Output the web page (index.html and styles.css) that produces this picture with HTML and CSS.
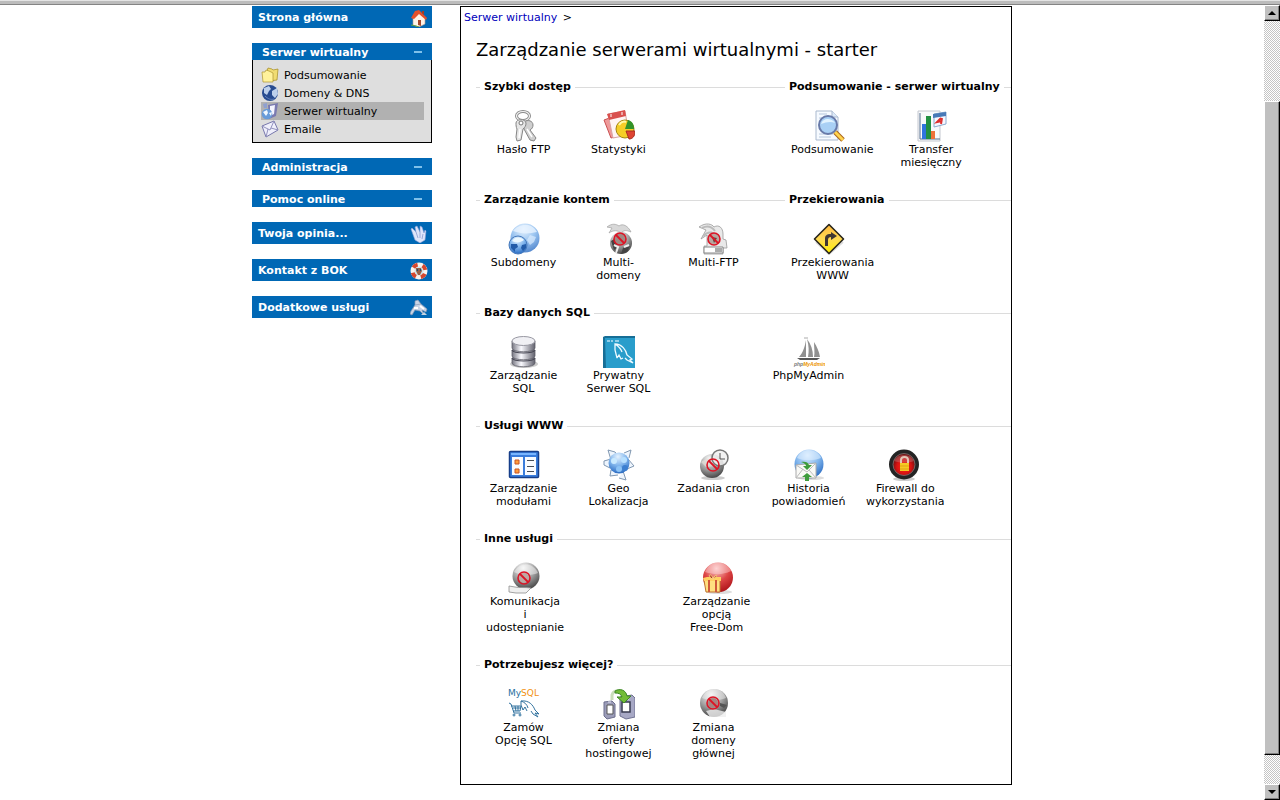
FILE: index.html
```html
<!DOCTYPE html>
<html lang="pl">

<head>
    <meta charset="UTF-8">
    <title>Zarządzanie serwerami wirtualnymi</title>
    <link rel="stylesheet" href="styles.css">
</head>

<body>
    <!-- shared gradients and symbols -->
    <svg class="defs" aria-hidden="true">
        <defs>
            <radialGradient id="blue" cx="45%" cy="20%" r="85%">
                <stop offset="0" stop-color="#e4f2ff" />
                <stop offset=".5" stop-color="#7fb4ec" />
                <stop offset="1" stop-color="#1f62bd" />
            </radialGradient>
            <radialGradient id="gray" cx="40%" cy="20%" r="85%">
                <stop offset="0" stop-color="#fafafa" />
                <stop offset=".5" stop-color="#a4a4a4" />
                <stop offset="1" stop-color="#3e3e3e" />
            </radialGradient>
            <radialGradient id="red" cx="45%" cy="20%" r="85%">
                <stop offset="0" stop-color="#fbd0d0" />
                <stop offset=".5" stop-color="#dd4545" />
                <stop offset="1" stop-color="#a80d14" />
            </radialGradient>
            <radialGradient id="glow" cx="50%" cy="60%" r="55%">
                <stop offset="0" stop-color="#ff2a12" />
                <stop offset=".6" stop-color="#d81212" />
                <stop offset="1" stop-color="#6d1010" />
            </radialGradient>
            <linearGradient id="metal">
                <stop offset="0" stop-color="#777782" />
                <stop offset=".4" stop-color="#fafaff" />
                <stop offset="1" stop-color="#62626e" />
            </linearGradient>
            <linearGradient id="yellow" x2="0" y2="1">
                <stop offset="0" stop-color="#ffb83e" />
                <stop offset=".5" stop-color="#ffda52" />
                <stop offset="1" stop-color="#fff000" />
            </linearGradient>
            <symbol id="ban" viewBox="0 0 14 14">
                <circle cx="7" cy="7" r="6" fill="none" stroke="#dc1425" stroke-width="1.6" />
                <path d="M3 3l8 8" stroke="#dc1425" stroke-width="1.8" />
            </symbol>
        </defs>
    </svg>

    <div id="topbar"></div>
    <div id="window">
        <div id="page">
            <nav id="sidebar">
                <a class="box" href="#">Strona główna
                    <svg viewBox="0 0 18 18"><path d="M3 9v7l6 2 6-3V8L9 3z" fill="#fff4e8" stroke="#ba9c8a" stroke-width=".6" /><path d="M1 9l4-7 4-1 8 8-1 2-7-6-5 5z" fill="#e4512b" /><path d="M12 2h2v4l-2-2z" fill="#a63c22" /><path d="M8 11h3v6l-3-1z" fill="#a5482c" /><path d="M1 16l5 1 3 1" stroke="#62a43e" fill="none" /></svg>
                </a>

                <div class="group">
                    <button type="button">Serwer wirtualny <svg class="minus" viewBox="0 0 8 2"><path d="M0 0h8v2H0z" /></svg></button>
                    <ul>
                        <li><a href="#">
                            <svg viewBox="0 0 18 18"><path d="M6 5l1-3 4 1 1 1 5-1-1 11-8 1z" fill="#f0dc72" stroke="#a48a20" stroke-width=".7" /><path d="M1 6h3l1-2 3 1 4 2v9H2z" fill="#fff29b" stroke="#ae942e" stroke-width=".7" /></svg>
                            Podsumowanie</a></li>
                        <li><a href="#">
                            <svg viewBox="0 0 18 18"><circle cx="9" cy="9" r="8" fill="#284c91" /><path d="M3 4l5-2 2 3-2 2-2 4-3-2zM11 7l5-3 1 6-3 4-3-3z" fill="#bdd0ec" /><path d="M4 12c3 3 6 4 9 3" stroke="#6583bb" fill="none" /></svg>
                            Domeny &amp; DNS</a></li>
                        <li class="active"><a href="#">
                            <svg viewBox="0 0 18 18"><path d="M2 2l4-1v5H3z" fill="#8fa0d0" /><path d="M7 3l10-2-2 13-7 3z" fill="#7a7ab0" /><path d="M9 4l5-1-1 9-4 2z" fill="#f5f5ff" /><circle cx="6" cy="12" r="5.3" fill="#679bd9" /><path d="M2 10l4-2 1 3-2 3zM8 11l3-1-1 4z" fill="#f0f8ff" /></svg>
                            Serwer wirtualny</a></li>
                        <li><a href="#">
                            <svg viewBox="0 0 18 18"><path d="M1 6l12-5 4 9-12 7z" fill="#efeffb" stroke="#7777ac" /><path d="M1 6l8 4 4-9M5 17l2-8M17 10l-7-2" fill="none" stroke="#9292be" /></svg>
                            Emaile</a></li>
                    </ul>
                </div>

                <div class="group"><button type="button">Administracja <svg class="minus" viewBox="0 0 8 2"><path d="M0 0h8v2H0z" /></svg></button></div>
                <div class="group"><button type="button">Pomoc online <svg class="minus" viewBox="0 0 8 2"><path d="M0 0h8v2H0z" /></svg></button></div>

                <a class="box" href="#">Twoja opinia...
                    <svg viewBox="0 0 18 18"><path d="M1 4l1-1 4 4-1-5 2-1 3 6V1l2 1 2 6 1-3 1 1-1 9-5 3-5-3z" fill="#dfe5fa" stroke="#8ba0d7" stroke-width=".6" /><path d="M6 7l2 6M10 7v6M13 9l-1 5" stroke="#9caad8" /></svg>
                </a>
                <a class="box" href="#">Kontakt z BOK
                    <svg viewBox="0 0 18 18"><circle cx="9" cy="9" r="6.5" fill="#cbe5ed" stroke="#f8f3ee" stroke-width="4" /><circle cx="9" cy="9" r="6.5" fill="none" stroke="#d4472f" stroke-width="4" stroke-dasharray="5 5.2" stroke-dashoffset="-3" /><path d="M6 6h5l1 3-2 4H8l-2-4z" fill="#9a6047" /><path d="M7 8h1M10 8h1" stroke="#174e78" stroke-width="2" /></svg>
                </a>
                <a class="box" href="#">Dodatkowe usługi
                    <svg viewBox="0 0 18 18"><path d="M5 6V2l3-1 3 4M1 12l4-6 6-1 6 5-1 3-4-2 2 5-4-4-5-1-3 5-2-1z" fill="#c8d4e6" stroke="#8798b3" stroke-width=".7" /><path d="M4 9l4 0M10 7l4 3" stroke="#fff" stroke-width="2" /><path d="M11 16h6l-3-3z" fill="#c4d4e2" /></svg>
                </a>
            </nav>

            <main>
                <p id="breadcrumb"><a href="#">Serwer wirtualny</a> &gt;</p>
                <h1>Zarządzanie serwerami wirtualnymi - starter</h1>

                <div class="row">
                    <section>
                        <h2>Szybki dostęp</h2>
                        <ul class="icons">
                            <li><a href="#">
                                <svg viewBox="0 0 32 32"><ellipse cx="15" cy="6" rx="6.5" ry="4.5" fill="none" stroke="#8a8a8a" stroke-width="3" /><ellipse cx="15" cy="6" rx="6.5" ry="4.5" fill="none" stroke="#f2f2f2" stroke-width="1.2" /><path d="M16 12c4-3 9-1 9 3 0 2-1 4-3 5l6 8-2 3-4-1-6-11z" fill="#cfcfcf" stroke="#858585" /><path d="M8 13c0-4 9-5 10 0 0 3-1 4-3 6l-2 11-4 1-1-4 1-8c-1-2-1-4-1-6z" fill="#e6e6e6" stroke="#858585" /><circle cx="13" cy="13" r="2" fill="#fff" stroke="#777" /><path d="M12 19l-1 9M19 19l5 8" stroke="#fff" stroke-width="1.5" /></svg>
                                <span>Hasło FTP</span></a></li>
                            <li><a href="#">
                                <svg viewBox="0 0 32 32"><path d="M1 10l8-3 3 20-4 1z" fill="#ef9999" stroke="#c94f50" /><path d="M5 4l17-3 4 24-16 3z" fill="#fff4f4" stroke="#d9a4a4" /><path d="M4 4l18-4 1 6-17 4z" fill="#d9504e" /><path d="M8 4v3M19 2v3" stroke="#fff" /><circle cx="22" cy="19" r="9" fill="#f5ce27" stroke="#a38411" /><path d="M22 19l3-9c4 1 6 4 6 9z" fill="#319329" /><path d="M23 21h9c0 6-3 8-6 8z" fill="#de4533" stroke="#a82d20" /><path d="M16 15c2-3 5-4 7-3" stroke="#fff8a4" stroke-width="2" fill="none" /></svg>
                                <span>Statystyki</span></a></li>
                        </ul>
                    </section>
                    <section>
                        <h2>Podsumowanie - serwer wirtualny</h2>
                        <ul class="icons">
                            <li><a href="#">
                                <svg viewBox="0 0 32 32"><path d="M3 1h16l6 6v23H3z" fill="#f6faff" stroke="#aab9ce" /><path d="M19 1v6h6" fill="#dce9f8" stroke="#aab9ce" /><path d="M6 4h8M6 8h6M6 24h14M6 27h12" stroke="#b6c7dc" /><path d="M22 22l8 8" stroke="#a86419" stroke-width="5" /><path d="M22 22l8 8" stroke="#ffd34e" stroke-width="3" /><circle cx="15" cy="15" r="9" fill="#a9d0f5" stroke="#687aa9" stroke-width="2" /><path d="M8 14c2-7 11-6 14-1-4-2-9-1-14 1z" fill="#e2f3ff" /></svg>
                                <span>Podsumowanie</span></a></li>
                            <li><a href="#">
                                <svg viewBox="0 0 32 32"><path d="M2 1h22v30H2z" fill="#f8f9fb" stroke="#c4c8d0" /><path d="M4 3v26h20" stroke="#566f8d" fill="none" /><path d="M6 14h4v15H6z" fill="#2f74dd" /><path d="M10 6h5v23h-5z" fill="#219042" /><path d="M15 21h4v8h-4z" fill="#ef713a" /><path d="M18 4l12-2v12l-12 3z" fill="#f5f7ff" stroke="#8aaace" /><path d="M17 4l13-2v4l-13 2z" fill="#4879b7" /><path d="M25 8l-4 4 5-1M26 8l-1 6" stroke="#df2f2d" stroke-width="2" fill="none" /></svg>
                                <span>Transfer miesięczny</span></a></li>
                        </ul>
                    </section>
                </div>

                <div class="row">
                    <section>
                        <h2>Zarządzanie kontem</h2>
                        <ul class="icons">
                            <li><a href="#">
                                <svg viewBox="0 0 32 32"><circle cx="17" cy="15" r="14.5" fill="url(#blue)" opacity=".8" /><path d="M5 8c4-6 18-10 24 1-8 2-16 2-24-1z" fill="#e7f3ff" opacity=".8" /><path d="M22 12l6 2-2 5-4 3-3-5z" fill="#dcecff" opacity=".7" /><circle cx="10" cy="22" r="9" fill="url(#blue)" stroke="#4679bb" /><path d="M3 21l6 0 1 3-3 2v3l-4-4zM14 22l4-1v4l-3 3-2-3z" fill="#235ca9" /><path d="M4 18c3-5 10-4 12-1-4 3-8 3-12 1z" fill="#ecf8ff" /></svg>
                                <span>Subdomeny</span></a></li>
                            <li><a href="#">
                                <svg viewBox="0 0 32 32"><path d="M4 4c5-4 9-3 12-1 4-3 9 0 12 6-5-2-7-2-10 1-3-3-8-3-12 0l3-5z" fill="#d8d8d8" stroke="#aaa" stroke-width=".8" /><circle cx="18" cy="20" r="11" fill="url(#gray)" /><path d="M8 18l5-3 1 10-3 2zM20 25l7-2-3 6-6 2z" fill="#444" /><path d="M11 22l4 2-2 6M21 24l5-2" stroke="#eee" stroke-width="2" fill="none" /><circle cx="17" cy="16" r="6" fill="#a08a84" /><use href="#ban" x="10" y="9" width="14" height="14" /></svg>
                                <span>Multi-<br>domeny</span></a></li>
                            <li><a href="#">
                                <svg viewBox="0 0 32 32"><path d="M1 4c7-5 13-3 15 0 5-3 9 1 9 7v5l3 1 1 8h-4v6H6v-8h3V12l-6 4 5-9z" fill="#e9e9e9" stroke="#999" stroke-width=".8" /><path d="M4 5c6-3 10-1 13 3M5 13c6-6 11-4 15 2" fill="none" stroke="#bbb" stroke-width="2" /><path d="M6 24h19v6H6z" fill="#fff" stroke="#888" /><path d="M17 25h7v4h-7z" fill="#aaa" /><circle cx="16" cy="16" r="6" fill="#b8a6a0" /><path d="M14 14l5 1-3 5z" fill="#5e4840" /><use href="#ban" x="9" y="9" width="14" height="14" /></svg>
                                <span>Multi-FTP</span></a></li>
                        </ul>
                    </section>
                    <section>
                        <h2>Przekierowania</h2>
                        <ul class="icons">
                            <li><a href="#">
                                <svg viewBox="0 0 32 32"><path d="M3 19l13 12 14-12" stroke="#ddd" stroke-width="2" fill="none" /><path d="M16 1.5L30.5 16 16 30.5 1.5 16z" fill="url(#yellow)" stroke="#29251b" stroke-width="1.6" stroke-linejoin="round" /><path d="M12 23h3v-6c0-2 1-3 3-3v3l6-4-6-4v2c-5 0-6 2-6 5z" fill="#403732" /></svg>
                                <span>Przekierowania WWW</span></a></li>
                        </ul>
                    </section>
                </div>

                <section>
                    <h2>Bazy danych SQL</h2>
                    <ul class="icons">
                        <li><a href="#">
                            <svg viewBox="0 0 32 32"><ellipse cx="16" cy="28" rx="14" ry="4" fill="#ccc" /><path d="M4 22v5c0 5 23 5 23 0v-5z" fill="url(#metal)" stroke="#60606a" stroke-width=".8" /><path d="M4 14v6c0 5 23 5 23 0v-6z" fill="url(#metal)" stroke="#60606a" stroke-width=".8" /><path d="M4 5v7c0 5 23 5 23 0V5z" fill="url(#metal)" stroke="#60606a" stroke-width=".8" /><ellipse cx="15.5" cy="5" rx="11.5" ry="4.5" fill="#f0f0f4" stroke="#9898a2" /><path d="M4 14c2 4 21 4 23 0M4 22c2 4 21 4 23 0" stroke="#4b4b57" stroke-width="1.2" fill="none" /></svg>
                            <span>Zarządzanie SQL</span></a></li>
                        <li><a href="#">
                            <svg viewBox="0 0 32 32"><path d="M0 1l2-1h30v32H0z" fill="#176e96" /><path d="M2 2h30v30H3z" fill="#299dcb" /><path d="M4 5h3M8 5h2M12 5h4" stroke="#b8e0f2" stroke-width="1.5" /><path d="M14 22l-2-8V8c7 0 11 6 12 11l5 4-2 1 3 3-6-3-2-2M14 22l2-3 2 4 2-1M12 8c3 2 6 5 7 8" stroke="#eefaff" stroke-width="1.3" fill="none" /></svg>
                            <span>Prywatny Serwer SQL</span></a></li>
                        <li></li>
                        <li><a href="#">
                            <svg viewBox="0 0 32 32"><path d="M13 4c-1 6-3 13-7 17h7zM14 3c2 7 2 12 1 18h5c0-7-2-13-6-18zM21 6c0 6 1 11 0 15h6c-1-6-3-10-6-15z" fill="#909090" /><path d="M4 22h23l-3 2H7z" fill="#555" /><path d="M11 2h4" stroke="#aaa" /><text x="1" y="30" class="pma">php<tspan fill="#ed9500">MyAdmin</tspan></text></svg>
                            <span>PhpMyAdmin</span></a></li>
                    </ul>
                </section>

                <section>
                    <h2>Usługi WWW</h2>
                    <ul class="icons">
                        <li><a href="#">
                            <svg viewBox="0 0 32 32"><rect x="1.5" y="2.5" width="29" height="26" rx="1" fill="#397cdc" stroke="#173e89" stroke-width="1.5" /><path d="M4 8h11v18H4zM17 8h11v18H17z" fill="#f9fbff" /><path d="M7 11h4v4H7zM7 20h4v4H7z" fill="#ff9d3c" stroke="#c85324" /><path d="M19 11.5h7M19 17.5h7M19 22.5h7" stroke="#454b56" stroke-width="1.2" /><path d="M3 5h25" stroke="#78b5ff" stroke-width="2" /></svg>
                            <span>Zarządzanie modułami</span></a></li>
                        <li><a href="#">
                            <svg viewBox="0 0 32 32"><g fill="#eef5fd" stroke="#8097b1"><path d="M5 1l7 2 4 5-8 3zM21 4l7-3-2 8M1 12l7-2-1 9-6-3zM25 10l6 7-7 3M8 21l-1 6 8-1M20 22l3 9-7-2" stroke-linejoin="round" /></g><circle cx="16" cy="14" r="10.5" fill="url(#blue)" /><circle cx="11" cy="12" r="3" fill="#c9eaff" /><circle cx="21" cy="11" r="3" fill="#b7e0ff" /><circle cx="22" cy="19" r="3" fill="#3c7fd0" /><circle cx="16" cy="20" r="3" fill="#8cc3f6" /></svg>
                            <span>Geo Lokalizacja</span></a></li>
                        <li><a href="#">
                            <svg viewBox="0 0 32 32"><ellipse cx="15" cy="29" rx="12" ry="2" fill="#ccc" /><circle cx="14" cy="17" r="12" fill="url(#gray)" /><path d="M3 13c5-4 13-5 20-2l-5 6-10 1z" fill="#e5dfd9" opacity=".7" /><circle cx="22" cy="9" r="8" fill="#f0f0f0" fill-opacity=".85" stroke="#777" stroke-width="1.5" /><path d="M22 4v6h5" fill="none" stroke="#555" /><use href="#ban" x="8" y="9" width="14" height="14" /></svg>
                            <span>Zadania cron</span></a></li>
                        <li><a href="#">
                            <svg viewBox="0 0 32 32"><ellipse cx="18" cy="29" rx="13" ry="2" fill="#ddd" /><circle cx="16" cy="15" r="14.5" fill="url(#blue)" /><path d="M4 9C9-2 24-1 28 9c-8 3-17 3-24 0z" fill="#daedff" opacity=".6" /><path d="M3 16l20-2v15H3z" fill="#f9f9f6" stroke="#aaa" /><path d="M3 16l11 7 9-9M3 29l7-9M23 29l-7-8" fill="none" stroke="#bbb" /><path d="M8 13c4-1 7 0 8 3h3l-5 5-4-4h3c0-2-2-3-5-4zM14 24l-5 4h3v4h4v-4h3z" fill="#3e9c3c" /></svg>
                            <span>Historia powiadomień</span></a></li>
                        <li><a href="#">
                            <svg viewBox="0 0 32 32"><ellipse cx="16" cy="30" rx="11" ry="2" fill="#ccc" /><circle cx="16" cy="15.5" r="15" fill="#242424" /><circle cx="16" cy="15.5" r="11" fill="url(#glow)" stroke="#777" stroke-width=".8" /><path d="M6 12c3-8 17-8 20 0-5 2-14 2-20 0z" fill="#c88" opacity=".4" /><path d="M13 15v-4c0-4 7-4 7 0v4" fill="none" stroke="#e2c5b6" stroke-width="2" /><path d="M12 14h9v8h-9z" fill="#f5ca24" /><path d="M12 17h9M12 20h9" stroke="#e3a313" /></svg>
                            <span>Firewall do wykorzystania</span></a></li>
                    </ul>
                </section>

                <section>
                    <h2>Inne usługi</h2>
                    <ul class="icons">
                        <li><a href="#">
                            <svg viewBox="0 0 32 32"><circle cx="18" cy="14" r="13.5" fill="url(#gray)" /><path d="M6 10c5-9 18-11 24 1-8 3-16 3-24-1z" fill="#f3f3f3" opacity=".5" /><path d="M1 24l6 1c4 1 9 0 16 1l-5 5H8l-7-1z" fill="#efefef" stroke="#8d8d8d" stroke-width=".8" /><circle cx="16" cy="16" r="5" fill="#bda8a3" /><use href="#ban" x="9" y="9" width="14" height="14" /></svg>
                            <span>Komunikacja<br>i<br>udostępnianie</span></a></li>
                        <li></li>
                        <li><a href="#">
                            <svg viewBox="0 0 32 32"><ellipse cx="18" cy="30" rx="13" ry="2" fill="#ddd" /><circle cx="17" cy="15.5" r="15" fill="url(#red)" /><path d="M4 10C9-3 25-2 30 9c-8 4-17 4-26 1z" fill="#ffd4d4" opacity=".45" /><path d="M3 18h16v12H5z" fill="#ffdf80" stroke="#bf732c" /><path d="M2 16l4-1h14v4H3z" fill="#ffd063" /><path d="M8 18v12M15 18v12" stroke="#cf593a" stroke-width="2" /><path d="M11 17c-6-5 0-6 1 0 2-6 7-4 0 0z" fill="#a73828" stroke="#ffd180" /></svg>
                            <span>Zarządzanie opcją<br>Free-Dom</span></a></li>
                    </ul>
                </section>

                <section>
                    <h2>Potrzebujesz więcej?</h2>
                    <ul class="icons">
                        <li><a href="#">
                            <svg viewBox="0 0 32 32"><text x="0" y="8" class="mysql">My<tspan fill="#f29111">SQL</tspan></text><g fill="none" stroke="#32739f"><path d="M1 15l2 1 3 9h7M3 18h10l-1 5H5M7 18l1 5M10 18v5M5 20h8" /><circle cx="6" cy="27" r="1" /><circle cx="12" cy="27" r="1" /><path d="M15 22l-2-5v-4c8-1 12 4 14 9l4 4-4-1 3 4-5-3-2-3M15 22l2-3 2 4M13 13c3 1 6 3 7 7" /></g></svg>
                            <span>Zamów Opcję SQL</span></a></li>
                        <li><a href="#">
                            <svg viewBox="0 0 32 32"><path d="M1 14l8-1 3 3v13l-8 2-3-3z" fill="#9b9cb8" stroke="#6c6e8d" /><path d="M4 17h6v9H4z" fill="#fff" stroke="#555" /><path d="M17 9l12-2 3 3v19l-9 2-6-3z" fill="#a7a8c5" stroke="#6f7191" /><path d="M19 14h8v10h-8z" fill="#fff" stroke="#393b50" stroke-width="1.5" /><path d="M5 14h3M20 11h6" stroke="#e9eaf7" /><path d="M9 12V7c1-3 3-4 5-4" fill="none" stroke="#c9ddba" stroke-width="3" /><path d="M12 3c5-3 11-1 12 5h4l-7 7-7-6h5c-1-3-3-4-7-4z" fill="#72bc37" stroke="#3e8727" /></svg>
                            <span>Zmiana oferty hostingowej</span></a></li>
                        <li><a href="#">
                            <svg viewBox="0 0 32 32"><circle cx="16" cy="15" r="14" fill="url(#gray)" /><path d="M4 10C9-2 24-2 28 10c-8 3-16 3-24 0z" fill="#f0f0f0" opacity=".5" /><path d="M8 23l8-2 12 3v5H12z" fill="#eee" opacity=".8" /><path d="M22 15l7 2-3 3-4-2z" fill="#555" /><circle cx="15" cy="15" r="5" fill="#a58480" /><use href="#ban" x="8" y="8" width="14" height="14" /></svg>
                            <span>Zmiana domeny głównej</span></a></li>
                    </ul>
                </section>
            </main>
        </div>

        <div id="scrollbar">
            <button type="button" aria-label="W górę"><svg viewBox="0 0 8 4"><path d="M4 0l4 4H0z" /></svg></button>
            <div class="track-top"></div>
            <div class="thumb"></div>
            <div class="track-bottom"></div>
            <button type="button" aria-label="W dół"><svg viewBox="0 0 8 4"><path d="M0 0h8L4 4z" /></svg></button>
        </div>
    </div>
</body>

</html>
```
FILE: styles.css
```css
* {
    box-sizing: border-box;
}

body {
    margin: 0;
    min-height: 100vh;
    display: flex;
    flex-direction: column;
    background: #fff;
    color: #000;
    font-family: Verdana, "DejaVu Sans", sans-serif;
    font-size: 11px;
    line-height: 13px;
}

ul {
    list-style: none;
    margin: 0;
    padding: 0;
}

a {
    color: inherit;
    text-decoration: none;
}

.defs {
    position: absolute;
    width: 0;
    height: 0;
}

#topbar {
    height: 5px;
    background: #bcbcbc;
    border-top: 1px solid #e4e4e4;
    border-bottom: 1px solid #848484;
}

#window {
    flex: 1;
    display: flex;
}

#page {
    flex: 1;
    display: flex;
    justify-content: center;
    align-items: flex-start;
    gap: 28px;
    padding: 1px 0 15px;
}

/* left menu */

#sidebar {
    width: 180px;
    display: flex;
    flex-direction: column;
    gap: 15px;
}

.box,
.group button {
    display: flex;
    align-items: center;
    justify-content: space-between;
    width: 100%;
    background: #0068b5;
    color: #fff;
    font-family: inherit;
    font-size: 11px;
    font-weight: bold;
}

.box {
    height: 22px;
    padding: 1px 4px 0 6px;
}

.box svg,
.group li svg {
    width: 18px;
    height: 18px;
}

.group button {
    height: 17px;
    border: 0;
    padding: 1px 10px 0;
}

.group .minus {
    width: 8px;
    height: 2px;
    fill: #7fc0ea;
}

.group ul {
    padding: 6px 7px 4px 8px;
    background: #dedede;
    border: 1px solid #000;
    border-top: 0;
}

.group li a {
    display: flex;
    align-items: center;
    gap: 5px;
    height: 18px;
}

.group .active {
    background: #b1b1b1;
}

/* main panel */

main {
    width: 552px;
    padding: 4px 0 0 15px;
    border: 1px solid #000;
}

#breadcrumb {
    margin: 0 0 0 -12px;
}

#breadcrumb a {
    color: #00b;
    margin-right: 2px;
}

h1 {
    margin: 16px 0 20px;
    font-size: 18px;
    font-weight: normal;
    line-height: 20px;
}

.row {
    display: grid;
    grid-template-columns: 305px minmax(0, 1fr);
}

h2 {
    display: flex;
    align-items: center;
    gap: 4px;
    margin: 0 0 16px;
    font-size: 11px;
    line-height: 14px;
    white-space: nowrap;
    overflow: hidden;
}

h2::before,
h2::after {
    content: "";
    height: 1px;
    background: #dcdcdc;
}

h2::before {
    width: 4px;
}

h2::after {
    flex: 1;
}

.icons {
    display: flex;
    gap: 20px;
    padding: 0 10px 24px;
}

.icons li {
    width: 75px;
    min-width: min-content;
    min-height: 59px;
    text-align: center;
}

.icons a,
.icons span {
    display: block;
}

.icons span {
    padding-top: 1px;
}

.icons svg {
    display: block;
    width: 32px;
    height: 32px;
    margin-left: 22px;
}

.pma {
    font: italic bold 5px "Liberation Sans", sans-serif;
    fill: #777;
}

.mysql {
    font: 9px "DejaVu Sans", sans-serif;
    fill: #28709e;
}

/* window scrollbar */

#scrollbar {
    width: 16px;
    display: flex;
    flex-direction: column;
    background: repeating-conic-gradient(#c4c4c4 0 25%, #fff 0 50%) 0 0 / 2px 2px;
}

#scrollbar button,
.thumb {
    background: #c0c0c0;
    border: 1px solid #fff;
    border-right-color: #000;
    border-bottom-color: #000;
    box-shadow: inset -1px -1px #808080;
}

#scrollbar button {
    height: 16px;
    padding: 0;
    display: flex;
    align-items: center;
    justify-content: center;
}

#scrollbar svg {
    width: 8px;
    height: 4px;
}

.track-top {
    flex: 80;
}

.thumb {
    flex: 654;
}

.track-bottom {
    flex: 29;
}
```
